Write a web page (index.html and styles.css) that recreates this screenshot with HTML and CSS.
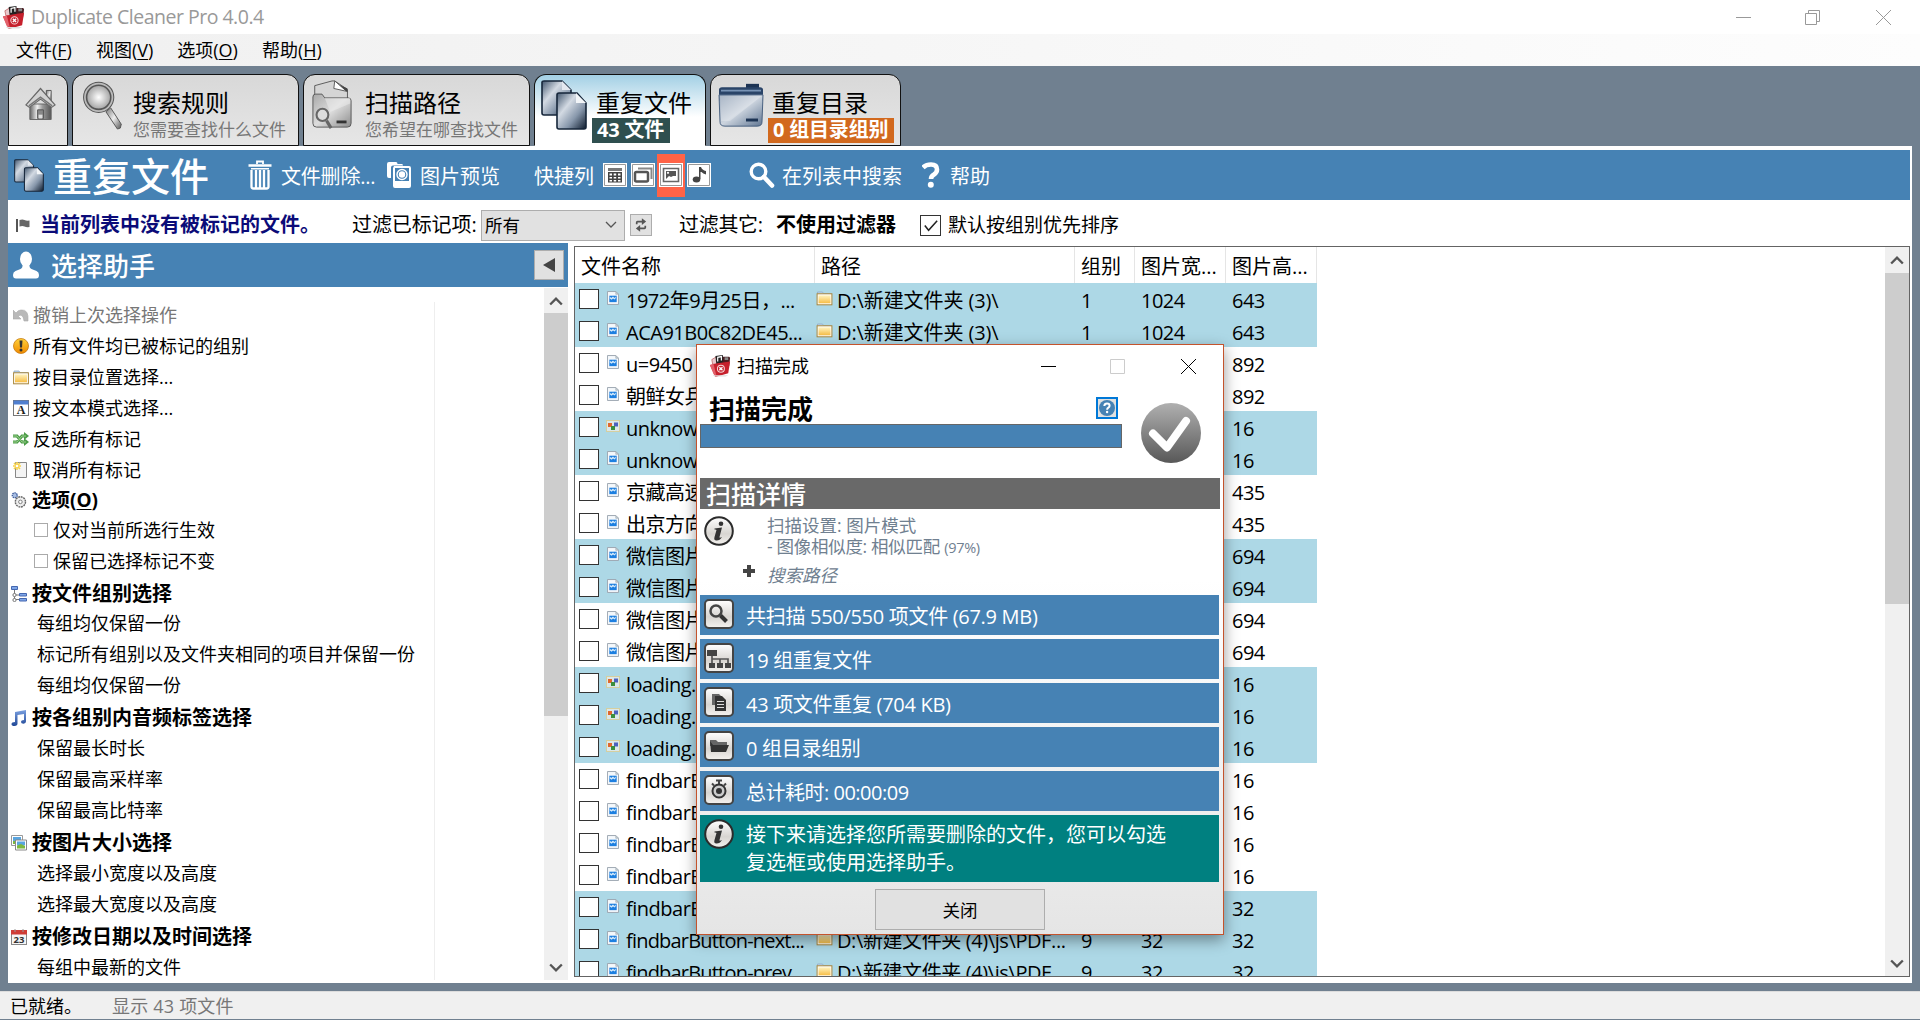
FILE: index.html
```html
<!DOCTYPE html>
<html lang="zh-CN">
<head>
<meta charset="utf-8">
<title>Duplicate Cleaner Pro 4.0.4</title>
<link rel="stylesheet" href="styles.css">
</head>
<body>
<svg class="defs" width="0" height="0">
  <defs>
    <linearGradient id="gSilver" x1="0" y1="0" x2="1" y2="1"><stop offset="0" stop-color="#777"/><stop offset=".5" stop-color="#eee"/><stop offset="1" stop-color="#555"/></linearGradient>
    <linearGradient id="gWall" x1="0" y1="0" x2="1" y2="0"><stop offset="0" stop-color="#666"/><stop offset=".35" stop-color="#eee"/><stop offset=".6" stop-color="#999"/><stop offset="1" stop-color="#555"/></linearGradient>
    <radialGradient id="gLens"><stop offset="0" stop-color="#fff"/><stop offset="1" stop-color="#999"/></radialGradient>
    <linearGradient id="gFolderGray" x1="0" y1="0" x2="1" y2="1"><stop offset="0" stop-color="#a8a8a8"/><stop offset=".5" stop-color="#ddd"/><stop offset="1" stop-color="#8c8c8c"/></linearGradient>
    <linearGradient id="gNavy" x1="0" y1="0" x2="1" y2="1"><stop offset="0" stop-color="#42566e"/><stop offset=".35" stop-color="#d3dae3"/><stop offset=".65" stop-color="#8797ab"/><stop offset="1" stop-color="#0c1a2c"/></linearGradient>
    <linearGradient id="gNavyV" x1="0" y1="0" x2="1" y2="1"><stop offset="0" stop-color="#8b9cb2"/><stop offset=".5" stop-color="#ccd4de"/><stop offset="1" stop-color="#5f7592"/></linearGradient>
    <linearGradient id="gCheck" x1="0" y1="0" x2="0" y2="1"><stop offset="0" stop-color="#b0b0b0"/><stop offset="1" stop-color="#585858"/></linearGradient>
    <linearGradient id="gBtn" x1="0" y1="0" x2="0" y2="1"><stop offset="0" stop-color="#fff"/><stop offset=".6" stop-color="#d8d5d1"/><stop offset="1" stop-color="#f4f2ef"/></linearGradient>
    <linearGradient id="gFold" x1="0" y1="0" x2="0" y2="1"><stop offset="0" stop-color="#fff3c0"/><stop offset="1" stop-color="#f6bd45"/></linearGradient>
    <linearGradient id="gOrange" x1="0" y1="0" x2="0" y2="1"><stop offset="0" stop-color="#ffd23c"/><stop offset="1" stop-color="#f08a00"/></linearGradient>
    <linearGradient id="gNote" x1="0" y1="0" x2="0" y2="1"><stop offset="0" stop-color="#7ba0e0"/><stop offset="1" stop-color="#1f4796"/></linearGradient>
  </defs>
  <symbol id="app" viewBox="0 0 24 24">
    <path d="M3 5l5-3 3 8H4z" fill="#e9c9cc" stroke="#a33" stroke-width=".6"/>
    <path d="M7 1l8-1 1 10H8z" fill="#222"/><path d="M9.500 7V2.500l4-.8V6" stroke="#fff" stroke-width="1.300" fill="none"/>
    <path d="M15 2h7l1 1-1 9h-7z" fill="#4a1c20"/><path d="M17 2.500h4v3h-4z" fill="#888"/>
    <path d="M1 11l8-2 14-2-2 13-14 4z" fill="#c6202c"/><path d="M1 11l4-1 3 12-3-1z" fill="#e2606a"/><path d="M4 22h17l-3 1.500H6z" fill="#ddd"/>
    <circle cx="13" cy="15" r="3.800" fill="#c6202c" stroke="#f6d5d7" stroke-width="1.100"/><path d="M11.300 13.300l3.400 3.400M14.700 13.300l-3.400 3.400" stroke="#fff" stroke-width="1.400"/>
  </symbol>
  <symbol id="house" viewBox="0 0 32 34">
    <path d="M22 3h5v12l-5-4z" fill="url(#gSilver)" stroke="#555"/>
    <path d="M5 17h22v16H5z" fill="url(#gWall)" stroke="#666"/>
    <path d="M13 23h6v9h-6z" fill="#888" stroke="#555"/><path d="M14 28h4v4h-4z" fill="#ddd"/>
    <path d="M1 18L16 1l15 17-3.500 2.500L16 12 4.500 20.500z" fill="#d2d2d2" stroke="#666" stroke-width="1.200"/><path d="M4 19l12-9 12 9" fill="none" stroke="#777" stroke-width="1.500"/>
  </symbol>
  <symbol id="glass" viewBox="0 0 42 52">
    <path d="M24 33l5-4 11 17-1 4-3 1z" fill="url(#gSilver)" stroke="#555"/>
    <circle cx="16.500" cy="18" r="14" fill="url(#gLens)" stroke="#555" stroke-width="4.500"/><circle cx="16.500" cy="18" r="14.300" fill="none" stroke="#bbb" stroke-width="1.800"/>
  </symbol>
  <symbol id="scanfolder" viewBox="0 0 44 52" preserveAspectRatio="none">
    <path d="M3 6l19-5 3 0 14 9v12H3z" fill="#d5d5d5" stroke="#555"/><path d="M25 1l-1 8 14 3z" fill="#fff" stroke="#555"/><path d="M30 5l9 4v4z" fill="#444"/>
    <path d="M1 18q0-3 3-3h7l3 4h26q3 0 3 3v24q0 4-4 4H5q-4 0-4-4z" fill="url(#gFolderGray)" stroke="#555"/><path d="M14 19h28v6L20 34z" fill="#eee" opacity=".5"/>
    <path d="M27 43h11v3H27z" fill="#333"/><path d="M16 43l5 8" stroke="#666" stroke-width="3.500"/><circle cx="11.500" cy="37" r="6.500" fill="#ddd" stroke="#666" stroke-width="2.300"/>
  </symbol>
  <symbol id="docs" viewBox="0 0 46 50">
    <path d="M1 2q0-1 2-1h18l9 9v25H3q-2 0-2-2z" fill="url(#gNavy)" stroke="#16263a" stroke-width="1.600"/><path d="M21 1v9h9z" fill="#e3e8ef"/>
    <path d="M16 15q0-2 2-2h18l9 10v24q0 2-2 2H18q-2 0-2-2z" fill="url(#gNavy)" stroke="#16263a" stroke-width="1.600"/><path d="M35 13v10h10z" fill="#f2f5f8"/>
  </symbol>
  <symbol id="bluefolder" viewBox="0 0 46 52" preserveAspectRatio="none">
    <path d="M28 1h13v8H28z" fill="#1d3454"/><rect x="1" y="5" width="44" height="17" rx="3" fill="#2a4468"/><path d="M3 9h40" stroke="#7893b5" stroke-width="2"/>
    <path d="M1 14h44l-1 32q0 5-5 5H7q-5 0-5-5z" fill="url(#gNavyV)" stroke="#415a7b"/><path d="M2 15h42L12 45H3z" fill="#fff" opacity=".25"/><path d="M28 42h12v3.500H28z" fill="#1d3454"/>
  </symbol>
  <symbol id="trash" viewBox="0 0 24 30">
    <path d="M9 4V1.500h6V4" fill="none" stroke="#fff" stroke-width="1.800"/><path d="M.5 4.200h23v2.500H.5zM3 8h18v1.600H3z" fill="#fff"/>
    <path d="M3.500 10v16.500q0 2 2 2h13q2 0 2-2V10M8 10v18M12 10v18M16 10v18" fill="none" stroke="#fff" stroke-width="2.300"/>
  </symbol>
  <symbol id="photos" viewBox="0 0 24 28">
    <path d="M0 3q0-2 2-2h7q1.500 0 1.500 2H15q1 0 1 1.500H6q-2 0-2 2V17H2q-2 0-2-2z" fill="#fff"/><path fill-rule="evenodd" d="M7 5h15q2 0 2 2v18q0 2-2 2H8q-2 0-2-2V7zm1 2v13h14V7z" fill="#fff"/><circle cx="15" cy="13.500" r="5" fill="none" stroke="#fff" stroke-width="1.400"/><circle cx="15" cy="13.500" r="3.200" fill="#fff"/>
  </symbol>
  <symbol id="qframe" viewBox="0 0 24 24"><path d="M0 0h24v24H0z" fill="#fff"/><path d="M1.500 1.500h21v21h-21z" fill="none" stroke="#999"/></symbol>
  <symbol id="q1" viewBox="0 0 24 24"><use href="#qframe"/><path d="M5 5h14v3H5z" fill="#777"/><path fill-rule="evenodd" d="M5 9h14v10.500H5zm1.500 1.500v2h2.500v-2zm4.200 0v2h2.500v-2zm4.300 0v2h2.500v-2zM6.500 14v1.500H9V14zm4.200 0v1.500h2.500V14zm4.300 0v1.500h2.500V14zM6.500 17v1.500H9V17zm4.200 0v1.500h2.500V17zm4.300 0v1.500h2.500V17z" fill="#444"/></symbol>
  <symbol id="q2" viewBox="0 0 24 24"><use href="#qframe"/><path d="M7 5.500h13.500V16" fill="none" stroke="#888" stroke-width="2"/><rect x="4" y="9" width="13" height="9.500" rx="1.500" fill="#fff" stroke="#555" stroke-width="2.500"/></symbol>
  <symbol id="q3" viewBox="0 0 24 24"><use href="#qframe"/><path d="M4.500 5.500h15v13h-15z" fill="#fff" stroke="#666" stroke-width="1.600"/><path d="M7 8h10v5h-3l-2 1-2-1-3 3z" fill="#555"/><circle cx="9" cy="9.800" r="1.100" fill="#fff"/></symbol>
  <symbol id="q4" viewBox="0 0 24 24"><use href="#qframe"/><ellipse cx="9.500" cy="16.500" rx="3.800" ry="3" fill="#444"/><path d="M12 16V4h2q1 3 5 4v3.500q-3-1-4.500-2.500h-1v7z" fill="#444"/></symbol>
  <symbol id="search" viewBox="0 0 26 26"><circle cx="9.500" cy="9.500" r="7.300" fill="none" stroke="currentColor" stroke-width="3.400"/><path d="M15 15l8 8.500" stroke="currentColor" stroke-width="4.600" stroke-linecap="round"/></symbol>
  <symbol id="qmark" viewBox="0 0 18 26"><path d="M1 5.500q3-3 8-3 6 0 6 5 0 3-3 5-3 1.700-3 4.500" fill="none" stroke="#fff" stroke-width="4.600"/><circle cx="8.800" cy="22.800" r="3" fill="#fff"/></symbol>
  <symbol id="flag" viewBox="0 0 14 15"><path d="M1 1v13" stroke="#555" stroke-width="2"/><path d="M3.500 2q3-1 5 0t5 .5V9q-3 .5-5-.5t-5 0z" fill="#666"/></symbol>
  <symbol id="person" viewBox="0 0 26 28"><ellipse cx="13" cy="8" rx="6" ry="7.500" fill="#fff"/><path d="M9.500 13h7q-.5 4 2 5l5 2q2.500 1 2.500 4 0 3.500-3 3.500H3q-3 0-3-3.500 0-3 2.500-4l5-2q2.500-1 2-5z" fill="#fff"/></symbol>
  <symbol id="undo" viewBox="0 0 16 16"><path d="M0 3v9h8L5 9q5-3 6 5h4Q16 2 8 3 5 3 3 6z" fill="#b9b9b9" stroke="#aaa" stroke-width=".6"/></symbol>
  <symbol id="warn" viewBox="0 0 16 16"><circle cx="8" cy="8" r="7.500" fill="url(#gOrange)" stroke="#c77a10" stroke-width=".8"/><path d="M6.500 2.500h3L9 9.500H7z" fill="#333"/><circle cx="8" cy="12" r="1.500" fill="#333"/></symbol>
  <symbol id="folder" viewBox="0 0 16 16"><path d="M1 2h5l1 1.500h8V6H1z" fill="#bcd5ee" stroke="#8fabc8" stroke-width=".8"/><rect x=".6" y="3.800" width="14.800" height="11" fill="#fff" stroke="#a8873b"/><path d="M2 5.300h12v8H2z" fill="url(#gFold)"/></symbol>
  <symbol id="textA" viewBox="0 0 16 16"><rect x=".5" y=".5" width="15" height="15" fill="#fff" stroke="#777"/><path d="M.5.500h15v4H.5z" fill="#4f7fd0"/><text x="8" y="13.600" text-anchor="middle" font-family="Liberation Serif, serif" font-weight="bold" font-size="12" fill="#222">A</text></symbol>
  <symbol id="shuffle" viewBox="0 0 16 16"><path d="M0 5h4l5 6h3M0 11h4l5-6h3" fill="none" stroke="#4c9c48" stroke-width="3"/><path d="M11 1l5 4-5 4zM11 7l5 4-5 4z" fill="#4c9c48"/><path d="M0 5h4l5 6h4M0 11h4l5-6h4" fill="none" stroke="#9bd08c"/></symbol>
  <symbol id="newpage" viewBox="0 0 16 16"><path d="M2.500.5h11v15h-11z" fill="#f4f4f4" stroke="#888"/><path d="M4 0v8M0 4h8M1 1l6 6M7 1L1 7" stroke="#f7d24a" stroke-width="1.600"/><circle cx="4" cy="4" r="1.300" fill="#fff"/></symbol>
  <symbol id="gears" viewBox="0 0 16 17"><circle cx="3.500" cy="3.500" r="2.600" fill="#a9bfe4" stroke="#46639f" stroke-width="1.500" stroke-dasharray="1.600 .7"/><circle cx="9.500" cy="10.500" r="5.400" fill="#eee" stroke="#666" stroke-width="1.500" stroke-dasharray="2 .8"/><circle cx="9.500" cy="10.500" r="1.900" fill="#fff" stroke="#777"/></symbol>
  <symbol id="tree" viewBox="0 0 16 16"><path d="M3.500 4v9.500H8M3.500 9H8" fill="none" stroke="#777"/><path d="M.5.500h6v3h-6zM8.500 7.500h7v2.500h-7zM8.500 12.500h7v2.500h-7z" fill="#7ea6e8" stroke="#4467b0"/><circle cx="3.500" cy="9" r="1.600" fill="#fff" stroke="#777"/><circle cx="3.500" cy="14" r="1.600" fill="#fff" stroke="#777"/></symbol>
  <symbol id="note" viewBox="0 0 16 16"><path d="M4 2l11-2v11.500q0 2-2.500 2.300-2.500 0-2.500-1.800t3-2V4L6.500 5v8.500q0 2-3 2.500Q.5 16 .5 14t3.500-2z" fill="url(#gNote)"/></symbol>
  <symbol id="pics" viewBox="0 0 16 16"><path d="M.5.500h11v10H.5z" fill="#fff" stroke="#999"/><path d="M2 2h8v4H2z" fill="#58a5e0"/><path d="M2 6h8v3H2z" fill="#7cb83f"/><path d="M4.500 5h11v10h-11z" fill="#fff" stroke="#888"/><path d="M6 6.500h8v4H6z" fill="#58a5e0"/><path d="M6 10.500l4-1.500 4 2v2.500H6z" fill="#7cb83f"/></symbol>
  <symbol id="cal" viewBox="0 0 16 16"><rect x=".5" y="1.500" width="15" height="14" fill="#f6f6f6" stroke="#888"/><path d="M0 1h16v4.500H0z" fill="#cf3d36"/><path d="M4 0v3M12 0v3" stroke="#999"/><text x="8" y="13.800" text-anchor="middle" font-family="Open Sans, sans-serif" font-weight="bold" font-size="9.500" fill="#333">23</text></symbol>
  <symbol id="img" viewBox="0 0 13 15"><path d="M.5.500h9l3 3v11H.5z" fill="#f5f8fb" stroke="#98a2ac"/><path d="M9.500.500v3h3z" fill="#ccd3da" stroke="#98a2ac" stroke-width=".6"/><path d="M2.500 5h8v7h-8z" fill="#1d7fe0"/><path d="M3 6l1.500 1.500L6.500 6l1.500 1.500L9.500 6v1.500L8.500 9 6.500 8 5 9.500 3 8z" fill="#d6ebfb"/></symbol>
  <symbol id="gif" viewBox="0 0 14 12"><path d="M0 0h14v12H0z" fill="#d5cfa0"/><path d="M1 1h12v10H1z" fill="#dbe8ea"/><path d="M2 3h4v4H2z" fill="#e0672c"/><path d="M8 2.500h4v4H8z" fill="#4b62bd"/><path d="M5 6h4v4H5z" fill="#3b8e3d"/></symbol>
  <symbol id="info" viewBox="0 0 30 30"><circle cx="15" cy="15" r="13.800" fill="url(#gBtn)" stroke="#2b2b2b" stroke-width="2"/><circle cx="17" cy="7.700" r="2.300" fill="#333"/><path d="M10.500 12.500l7.500-1-2.500 9.500q-.3 1.500 2.500 0-2 3.500-5.500 3.500-3 0-2-3.500l2-7q-.5-.8-2-.5z" fill="#333"/></symbol>
  <symbol id="frame" viewBox="0 0 30 30"><rect x="1" y="1" width="28" height="28" rx="4" fill="url(#gBtn)" stroke="#444" stroke-width="2"/></symbol>
  <symbol id="sSearch" viewBox="0 0 30 30"><use href="#frame"/><circle cx="12" cy="12" r="5.500" fill="none" stroke="#444" stroke-width="2.500"/><path d="M16.500 16.500l6 6" stroke="#333" stroke-width="4"/></symbol>
  <symbol id="sTree" viewBox="0 0 30 30"><use href="#frame"/><path d="M8 13v7M8 16h16v4M16 16v4" fill="none" stroke="#555" stroke-width="1.700"/><path d="M3 7h10v6H3zM5 20h6v5H5zM13 20h6v5h-6zM21 20h6v5h-6z" fill="#444"/></symbol>
  <symbol id="sDocs" viewBox="0 0 30 30"><use href="#frame"/><path d="M8 7h7l3 3v8H8z" fill="#666"/><path d="M11 9h7l4 4v11H11z" fill="#333"/><path d="M13 14.500h7M13 17.500h7M13 20.500h7" stroke="#ddd"/></symbol>
  <symbol id="sFolder" viewBox="0 0 30 30"><use href="#frame"/><path d="M6 9h6l2 2h9v4H6z" fill="#666"/><path d="M7 21L6 10l3 4h16l-3 7z" fill="#333"/></symbol>
  <symbol id="sClock" viewBox="0 0 30 30"><use href="#frame"/><path d="M12 5.500h6M15 5v4M8 8.500l2 2M22 8.500l-2 2" stroke="#444" stroke-width="2"/><circle cx="15" cy="16" r="6.500" fill="#ccc" stroke="#333" stroke-width="2"/><circle cx="15" cy="16" r="3" fill="#333"/></symbol>
</svg>

<div class="window">
  <header class="titlebar">
    <svg class="app-icon"><use href="#app"/></svg>
    <h1 class="app-title">Duplicate Cleaner Pro 4.0.4</h1>
    <svg class="winctl" viewBox="0 0 162 20"><path d="M1 10.500h15" stroke="#999"/><path d="M70.500 6.500h11v11h-11zM73.500 6v-2.500h11v11H82" fill="none" stroke="#999"/><path d="M141 3l15 15M156 3l-15 15" stroke="#999"/></svg>
  </header>
  <nav class="menubar"><span>文件(<u>F</u>)</span><span>视图(<u>V</u>)</span><span>选项(<u>O</u>)</span><span>帮助(<u>H</u>)</span></nav>

  <div class="tabs">
    <div class="tab home"><svg class="i-house"><use href="#house"/></svg></div>
    <div class="tab rules"><svg class="i-glass"><use href="#glass"/></svg><div class="tab-text"><b>搜索规则</b><small>您需要查找什么文件</small></div></div>
    <div class="tab paths"><svg class="i-scan"><use href="#scanfolder"/></svg><div class="tab-text"><b>扫描路径</b><small>您希望在哪查找文件</small></div></div>
    <div class="tab files active"><svg class="i-docs"><use href="#docs"/></svg><div class="tab-text"><b>重复文件</b><em class="badge green">43 文件</em></div></div>
    <div class="tab dirs"><svg class="i-bfold"><use href="#bluefolder"/></svg><div class="tab-text"><b>重复目录</b><em class="badge orange">0 组目录组别</em></div></div>
  </div>

  <main class="page">
    <div class="toolbar">
      <svg class="t-docs"><use href="#docs"/></svg><h2>重复文件</h2>
      <svg class="t-trash"><use href="#trash"/></svg><span class="t-delete">文件删除...</span>
      <svg class="t-photos"><use href="#photos"/></svg><span class="t-preview">图片预览</span>
      <span class="t-cols">快捷列</span>
      <div class="quick"><i><svg><use href="#q1"/></svg></i><i><svg><use href="#q2"/></svg></i><i class="on"><svg><use href="#q3"/></svg></i><i><svg><use href="#q4"/></svg></i></div>
      <svg class="t-search"><use href="#search"/></svg><span class="t-find">在列表中搜索</span>
      <svg class="t-q"><use href="#qmark"/></svg><span>帮助</span>
    </div>

    <div class="filters">
      <svg class="f-flag"><use href="#flag"/></svg><strong class="marked">当前列表中没有被标记的文件。</strong>
      <span class="f-label">过滤已标记项:</span>
      <div class="select"><span>所有</span><svg viewBox="0 0 12 8"><path d="M1 1l5 5 5-5" fill="none" stroke="#555" stroke-width="1.300"/></svg></div>
      <div class="refresh"><svg viewBox="0 0 14 16"><path d="M2 7V5q0-1 1-1h6M12 9v2q0 1-1 1H5" fill="none" stroke="#555" stroke-width="2"/><path d="M8 0l5 4-5 4zM6 8l-5 4 5 4z" fill="#555"/></svg></div>
      <span class="f-other">过滤其它:</span><strong class="f-none">不使用过滤器</strong>
      <span class="cb"><svg viewBox="0 0 20 20"><path d="M4 10l4 5 9-10" fill="none" stroke="#222" stroke-width="1.600"/></svg></span><span class="f-sort">默认按组别优先排序</span>
    </div>

    <div class="columns">
      <aside class="assist">
        <div class="assist-head"><svg><use href="#person"/></svg><h3>选择助手</h3><div class="collapse"></div></div>
        <div class="assist-body">
          <ul class="acts">
            <li class="off"><svg><use href="#undo"/></svg>撤销上次选择操作</li>
            <li><svg><use href="#warn"/></svg>所有文件均已被标记的组别</li>
            <li><svg><use href="#folder"/></svg>按目录位置选择...</li>
            <li><svg><use href="#textA"/></svg>按文本模式选择...</li>
            <li><svg><use href="#shuffle"/></svg>反选所有标记</li>
            <li><svg><use href="#newpage"/></svg>取消所有标记</li>
            <li class="head opts"><svg><use href="#gears"/></svg>选项(<u>O</u>)</li>
            <li class="opt"><i></i>仅对当前所选行生效</li>
            <li class="opt"><i></i>保留已选择标记不变</li>
            <li class="head grp"><svg><use href="#tree"/></svg>按文件组别选择</li>
            <li class="sub">每组均仅保留一份</li>
            <li class="sub">标记所有组别以及文件夹相同的项目并保留一份</li>
            <li class="sub">每组均仅保留一份</li>
            <li class="head"><svg><use href="#note"/></svg>按各组别内音频标签选择</li>
            <li class="sub">保留最长时长</li>
            <li class="sub">保留最高采样率</li>
            <li class="sub">保留最高比特率</li>
            <li class="head"><svg><use href="#pics"/></svg>按图片大小选择</li>
            <li class="sub">选择最小宽度以及高度</li>
            <li class="sub">选择最大宽度以及高度</li>
            <li class="head"><svg><use href="#cal"/></svg>按修改日期以及时间选择</li>
            <li class="sub">每组中最新的文件</li>
          </ul>
          <div class="scroll side"><svg class="arrow" viewBox="0 0 12 10"><path d="M1 8l5-5 5 5" /></svg><div class="thumb"></div><svg class="arrow" viewBox="0 0 12 10"><path d="M1 2l5 5 5-5"/></svg></div>
        </div>
      </aside>

      <section class="list">
        <div class="grid">
          <div class="row th"><span>文件名称</span><span>路径</span><span>组别</span><span>图片宽...</span><span>图片高...</span></div>
          <div class="row hl"><span><i></i><svg><use href="#img"/></svg><q>1972年9月25日，...</q></span><span><svg><use href="#folder"/></svg><q>D:\新建文件夹 (3)\</q></span><span>1</span><span>1024</span><span>643</span></div>
          <div class="row hl"><span><i></i><svg><use href="#img"/></svg><q>ACA91B0C82DE45...</q></span><span><svg><use href="#folder"/></svg><q>D:\新建文件夹 (3)\</q></span><span>1</span><span>1024</span><span>643</span></div>
          <div class="row"><span><i></i><svg><use href="#img"/></svg><q>u=9450</q></span><span></span><span></span><span></span><span>892</span></div>
          <div class="row"><span><i></i><svg><use href="#img"/></svg><q>朝鲜女兵</q></span><span></span><span></span><span></span><span>892</span></div>
          <div class="row hl"><span><i></i><svg class="gif"><use href="#gif"/></svg><q>unknown</q></span><span></span><span></span><span></span><span>16</span></div>
          <div class="row hl"><span><i></i><svg><use href="#img"/></svg><q>unknown</q></span><span></span><span></span><span></span><span>16</span></div>
          <div class="row"><span><i></i><svg><use href="#img"/></svg><q>京藏高速</q></span><span></span><span></span><span></span><span>435</span></div>
          <div class="row"><span><i></i><svg><use href="#img"/></svg><q>出京方向</q></span><span></span><span></span><span></span><span>435</span></div>
          <div class="row hl"><span><i></i><svg><use href="#img"/></svg><q>微信图片</q></span><span></span><span></span><span></span><span>694</span></div>
          <div class="row hl"><span><i></i><svg><use href="#img"/></svg><q>微信图片</q></span><span></span><span></span><span></span><span>694</span></div>
          <div class="row"><span><i></i><svg><use href="#img"/></svg><q>微信图片</q></span><span></span><span></span><span></span><span>694</span></div>
          <div class="row"><span><i></i><svg><use href="#img"/></svg><q>微信图片</q></span><span></span><span></span><span></span><span>694</span></div>
          <div class="row hl"><span><i></i><svg class="gif"><use href="#gif"/></svg><q>loading.</q></span><span></span><span></span><span></span><span>16</span></div>
          <div class="row hl"><span><i></i><svg class="gif"><use href="#gif"/></svg><q>loading.</q></span><span></span><span></span><span></span><span>16</span></div>
          <div class="row hl"><span><i></i><svg class="gif"><use href="#gif"/></svg><q>loading.</q></span><span></span><span></span><span></span><span>16</span></div>
          <div class="row"><span><i></i><svg><use href="#img"/></svg><q>findbarB</q></span><span></span><span></span><span></span><span>16</span></div>
          <div class="row"><span><i></i><svg><use href="#img"/></svg><q>findbarB</q></span><span></span><span></span><span></span><span>16</span></div>
          <div class="row"><span><i></i><svg><use href="#img"/></svg><q>findbarB</q></span><span></span><span></span><span></span><span>16</span></div>
          <div class="row"><span><i></i><svg><use href="#img"/></svg><q>findbarB</q></span><span></span><span></span><span></span><span>16</span></div>
          <div class="row hl"><span><i></i><svg><use href="#img"/></svg><q>findbarB</q></span><span></span><span></span><span></span><span>32</span></div>
          <div class="row hl"><span><i></i><svg><use href="#img"/></svg><q class="tight">findbarButton-next...</q></span><span><svg><use href="#folder"/></svg><q class="long">D:\新建文件夹 (4)\js\PDF...</q></span><span>9</span><span>32</span><span>32</span></div>
          <div class="row hl"><span><i></i><svg><use href="#img"/></svg><q class="tight">findbarButton-prev...</q></span><span><svg><use href="#folder"/></svg><q class="long">D:\新建文件夹 (4)\js\PDF...</q></span><span>9</span><span>32</span><span>32</span></div>
        </div>
        <div class="scroll main"><svg class="arrow" viewBox="0 0 12 10"><path d="M1 8l5-5 5 5"/></svg><div class="thumb"></div><svg class="arrow" viewBox="0 0 12 10"><path d="M1 2l5 5 5-5"/></svg></div>
      </section>
    </div>
  </main>

  <footer class="status"><span>已就绪。</span><span class="count">显示 43 项文件</span></footer>
</div>

<div class="dialog">
  <div class="d-title"><svg class="app-icon"><use href="#app"/></svg><span>扫描完成</span>
    <svg class="d-ctl" viewBox="0 0 160 20"><path d="M1 10.500h15" stroke="#000"/><path d="M70.500 3.500h14v14h-14z" fill="none" stroke="#ccc"/><path d="M141 3l15 15M156 3l-15 15" stroke="#000"/></svg></div>
  <div class="d-top">
    <div class="d-prog"><div class="d-headrow"><h2>扫描完成</h2><div class="helpbtn"><svg viewBox="0 0 18 18"><circle cx="9" cy="9" r="8" fill="#4682b4"/><path d="M6.300 7q.3-2.400 2.700-2.400 2.600 0 2.600 2.200 0 1.200-1.200 1.900-1.300.8-1.300 2" fill="none" stroke="#fff" stroke-width="2"/><circle cx="9.100" cy="13" r="1.200" fill="#fff"/></svg></div></div><div class="bar"></div></div>
    <svg class="check" viewBox="0 0 60 60"><circle cx="30" cy="30" r="30" fill="url(#gCheck)"/><path d="M12 30.500l14 14L45 18" fill="none" stroke="#fff" stroke-width="8" stroke-linecap="round" stroke-linejoin="round"/></svg>
  </div>
  <h3 class="d-sub">扫描详情</h3>
  <div class="d-info"><svg class="i30"><use href="#info"/></svg><svg class="plus" viewBox="0 0 12 12"><path d="M6 0v12M0 6h12" stroke="#444" stroke-width="4"/></svg>
    <div class="d-lines"><p>扫描设置: 图片模式</p><p class="sim">- 图像相似度: 相似匹配 <small>(97%)</small></p><p class="it">搜索路径</p></div></div>
  <div class="stats">
    <div class="stat"><svg class="i30"><use href="#sSearch"/></svg><span>共扫描 550/550 项文件 (67.9 MB)</span></div>
    <div class="stat"><svg class="i30"><use href="#sTree"/></svg><span>19 组重复文件</span></div>
    <div class="stat"><svg class="i30"><use href="#sDocs"/></svg><span>43 项文件重复 (704 KB)</span></div>
    <div class="stat"><svg class="i30"><use href="#sFolder"/></svg><span>0 组目录组别</span></div>
    <div class="stat"><svg class="i30"><use href="#sClock"/></svg><span class="time">总计耗时: 00:00:09</span></div>
    <div class="stat next"><svg class="i30"><use href="#info"/></svg><span>接下来请选择您所需要删除的文件，您可以勾选<br>复选框或使用选择助手。</span></div>
  </div>
  <button class="close">关闭</button>
</div>
</body>
</html>
```
FILE: styles.css
```css
* { box-sizing: border-box; }
body { margin: 0; width: 1920px; height: 1020px; overflow: hidden; position: relative; color: #000; font: 400 20px/28px "Open Sans", "Noto Sans CJK SC", sans-serif; white-space: nowrap; }
h1, h2, h3, p, ul { margin: 0; padding: 0; font-weight: inherit; list-style: none; }
i, em { font-style: normal; }
q { quotes: none; }
svg { display: block; flex: none; }
.defs { position: absolute; }
.window { height: 1020px; display: flex; flex-direction: column; background: #708090; }

.titlebar { height: 34px; background: #fff; display: flex; align-items: center; padding-left: 2px; }
.app-icon { width: 23px; height: 23px; }
.app-title { font-size: 19.500px; color: #999; margin-left: 6px; letter-spacing: -.5px; }
.winctl { width: 162px; height: 20px; margin-left: auto; margin-right: 23px; }
.menubar { height: 32px; display: flex; align-items: center; gap: 24px; padding-left: 16px; font-size: 18px; background: linear-gradient(90deg, #f0f0f0, #fdfdfd); }
u { text-underline-offset: 2px; text-decoration-thickness: 1px; }

.tabs { height: 80px; padding: 8px 0 0 8px; display: flex; gap: 4px; }
.tab { height: 72px; border: 1px solid #111; border-radius: 12px 12px 0 0; background: linear-gradient(#d8d8d8, #e6e6e6); display: flex; align-items: flex-start; }
.home { width: 60px; padding: 12px 0 0 16px; }
.rules { width: 227px; padding: 5px 0 0 9px; }
.paths { width: 227px; padding: 5px 0 0 8px; }
.files { width: 172px; padding: 5px 0 0 6px; }
.dirs { width: 191px; padding: 8px 0 0 7px; }
.active { background: linear-gradient(#a3d0e5, #fff 60%); border-bottom-color: #fff; }
.i-house { width: 31px; height: 34px; }
.i-glass { width: 42px; height: 50px; margin-right: 9px; }
.i-scan { width: 40px; height: 49px; margin-right: 13px; }
.i-docs { width: 46px; height: 50px; margin-right: 5px; }
.i-bfold { width: 46px; height: 44px; margin-right: 4px; }
.tab-text { display: flex; flex-direction: column; align-items: flex-start; padding-top: 8px; }
.tab-text b { font-weight: inherit; font-size: 24px; line-height: 30px; }
.tab-text small { font-size: 17px; line-height: 24px; color: #777; }
.files .tab-text b, .dirs .tab-text b { padding-left: 4px; }
.dirs .tab-text { padding-top: 5px; }
.badge { font-weight: 700; font-size: 20px; line-height: 24px; height: 25px; color: #fff; padding: 0 6px 0 5px; letter-spacing: -.2px; }
.green { background: #2f4f4f; }
.orange { background: #d2691e; }

.page { flex: none; height: 837px; margin: 0 8px; padding-top: 4px; background: #fff; }
.toolbar { height: 50px; width: 1902px; background: #4682b4; color: #fff; display: flex; align-items: center; padding-left: 6px; }
.toolbar h2 { font-size: 39px; font-weight: 500; line-height: 48px; margin-left: 9px; width: 195px; padding-top: 1px; }
.toolbar span { padding-top: 4px; }
.t-docs { width: 30px; height: 33px; }
.t-trash { width: 24px; height: 30px; margin: 0 9px 0 0; }
.t-delete { width: 106px; letter-spacing: -.2px; }
.t-photos { width: 24px; height: 28px; margin-right: 9px; }
.t-preview { width: 114px; }
.t-cols { width: 67px; }
.quick { display: flex; margin-right: 36px; }
.quick i { width: 28px; height: 43px; display: flex; align-items: center; justify-content: center; }
.quick .on { background: #ff6347; }
.quick svg { width: 24px; height: 24px; }
.t-search { width: 26px; height: 26px; margin-right: 7px; }
.t-find { width: 140px; }
.t-q { width: 18px; height: 26px; margin-right: 10px; }

.filters { height: 43px; display: flex; align-items: center; padding: 7px 0 0 8px; }
.f-flag { width: 14px; height: 15px; margin-right: 10px; }
.marked { color: #0b0b78; font-weight: 600; width: 312px; }
.f-label { width: 129px; letter-spacing: -.1px; }
.select { width: 144px; height: 31px; border: 1px solid #adadad; background: #e1e1e1; display: flex; align-items: center; justify-content: space-between; padding: 0 7px 0 3px; font-size: 17.500px; margin-right: 5px; }
.select svg { width: 12px; height: 8px; }
.refresh { width: 22px; height: 22px; border: 1px solid #adadad; background: #e1e1e1; display: grid; place-items: center; margin-right: 27px; }
.refresh svg { width: 12px; height: 14px; }
.f-other { width: 97px; letter-spacing: -.3px; }
.f-none { width: 144px; font-weight: 700; }
.cb { width: 21px; height: 21px; border: 1px solid #333; margin-right: 7px; }
.f-sort { font-size: 19px; }

.columns { display: flex; height: 740px; }
.assist { width: 560px; margin-right: 6px; }
.assist-head { height: 44px; background: #4682b4; color: #fff; display: flex; align-items: center; padding: 0 4px 0 5px; }
.assist-head svg { width: 26px; height: 28px; margin-right: 12px; }
.assist-head h3 { font-size: 26px; font-weight: 500; line-height: 36px; flex: 1; padding-top: 2px; }
.collapse { width: 30px; height: 30px; background: #e1e1e1; border: 1px solid #adadad; display: grid; place-items: center; }
.collapse::before { content: ""; border: 7px solid transparent; border-right: 12px solid #444; border-left: 0; }
.assist-body { height: 693px; padding-top: 1px; display: flex; justify-content: space-between; }
.acts { width: 427px; padding-top: 11px; position: relative; font-size: 18px; background: linear-gradient(#eee, #eee) 426px 14px / 1px 680px no-repeat; }
.acts li { height: 31px; display: flex; align-items: center; padding-left: 5px; }
.acts svg { width: 16px; height: 16px; margin-right: 4px; }
.acts .off { color: #777; }
.acts .head { height: 32px; padding: 4px 0 0 3px; font-size: 20px; font-weight: 700; }
.acts .head svg { margin-right: 5px; }
.acts .opts { height: 29px; padding-top: 0; font-size: 19px; }
.acts .grp { height: 31px; }
.acts .sub { padding-left: 29px; }
.acts .opt { padding-left: 26px; }
.opt i { width: 14px; height: 14px; border: 1px solid #aaa; margin-right: 5px; }

.scroll { width: 24px; background: #f0f0f0; display: flex; flex-direction: column; align-items: center; }
.arrow { width: 14px; height: 12px; margin: 7px 0 6px; }
.arrow path { fill: none; stroke: #555; stroke-width: 2; }
.thumb { width: 24px; background: #cdcdcd; }
.side .thumb { height: 403px; margin-bottom: auto; }
.side { height: 692px; }
.main .thumb { height: 331px; margin: 1px 0 auto; }

.list { width: 1336px; height: 731px; margin-top: 3px; border: 1px solid #646464; display: flex; justify-content: space-between; overflow: hidden; }
.row { display: grid; grid-template-columns: 240px 260px 60px 91px 91px; height: 32px; }
.row.hl { background: #add8e6; }
.row > span { display: flex; align-items: center; padding-left: 6px; overflow: hidden; padding-top: 4px; font-size: 20px; letter-spacing: -.5px; }
.row.th { height: 36px; }
.row.th > span { border-right: 1px solid #e5e5e5; letter-spacing: 0; }
.row > span:first-child { padding-left: 4px; }
.row.th > span:first-child { padding-left: 6px; }
.row i { width: 20px; height: 20px; background: #fff; border: 1px solid #333; margin: -4px 8px 0 0; flex: none; }
.row svg { width: 12px; height: 14px; margin: -7px 7px 0 0; }
.row svg.gif { width: 14px; height: 12px; margin: -7px 6px 0 -1px; }
.row > span:nth-child(2) { padding-left: 1px; letter-spacing: -.1px; }
.row.th > span:nth-child(2) { padding-left: 6px; }
.row > span:nth-child(2) svg { width: 17px; height: 16px; margin-right: 4px; }
.row .tight { letter-spacing: -.8px; }
.row .long { letter-spacing: -.4px; }

.status { height: 28px; margin-top: 8px; background: #f0f0f0; border-top: 1px solid #ddd; display: flex; align-items: center; padding: 0 0 0 10px; font-size: 18px; }
.status span { width: 102px; }
.status .count { color: #777; width: auto; letter-spacing: .2px; }

.dialog { position: absolute; left: 696px; top: 344px; width: 528px; height: 591px; border: 1px solid #c4532c; background: linear-gradient(#fff 40%, #e5e5e5); box-shadow: 0 5px 14px rgba(0, 0, 0, .4); padding-left: 3px; }
.d-title { height: 42px; display: flex; align-items: center; padding-left: 9px; font-size: 18px; }
.d-title .app-icon { width: 22px; height: 22px; margin-right: 6px; }
.d-ctl { width: 160px; height: 20px; margin-left: auto; margin-right: 23px; }
.d-top { height: 91px; display: flex; padding-top: 9px; }
.d-prog { width: 422px; }
.d-headrow { height: 28px; display: flex; justify-content: space-between; padding: 0 4px 0 9px; }
.d-headrow h2 { font-size: 26px; font-weight: 600; line-height: 26px; }
.helpbtn { width: 22px; height: 22px; margin-top: 1px; border: 2px solid #0078d7; background: #e1e1e1; }
.bar { height: 24px; background: #4682b4; border: 1px solid #666; }
.check { width: 60px; height: 60px; margin: 7px 0 0 19px; }
.d-sub { height: 31px; width: 520px; background: #696969; color: #fff; font-size: 25px; font-weight: 500; line-height: 33px; padding-left: 6px; }
.d-info { height: 86px; display: flex; padding: 7px 0 0 4px; color: #708090; font-size: 17.500px; }
.i30 { width: 30px; height: 30px; }
.plus { width: 12px; height: 12px; margin: 49px 12px 0 9px; }
.d-lines { margin-top: -1px; }
.d-lines p { line-height: 21px; }
.d-lines .sim { letter-spacing: -.3px; }
.d-lines p.it { font-style: italic; margin-top: 7px; }
.d-lines small { font-size: 14.500px; }
.stats { width: 519px; display: flex; flex-direction: column; gap: 4px; }
.stat { height: 40px; background: #4682b4; color: #fff; display: flex; padding: 4px 0 0 4px; }
.stat span { margin-left: 12px; line-height: 35px; letter-spacing: -.3px; }
.stat .time { letter-spacing: -.5px; }
.next { height: 67px; background: #008080; }
.stat.next span { line-height: 28px; letter-spacing: 0; padding-top: 2px; }
.close { display: block; width: 170px; height: 41px; margin: 7px 0 0 175px; background: #e1e1e1; border: 1px solid #adadad; font: inherit; font-size: 17.500px; padding: 0; }
```
